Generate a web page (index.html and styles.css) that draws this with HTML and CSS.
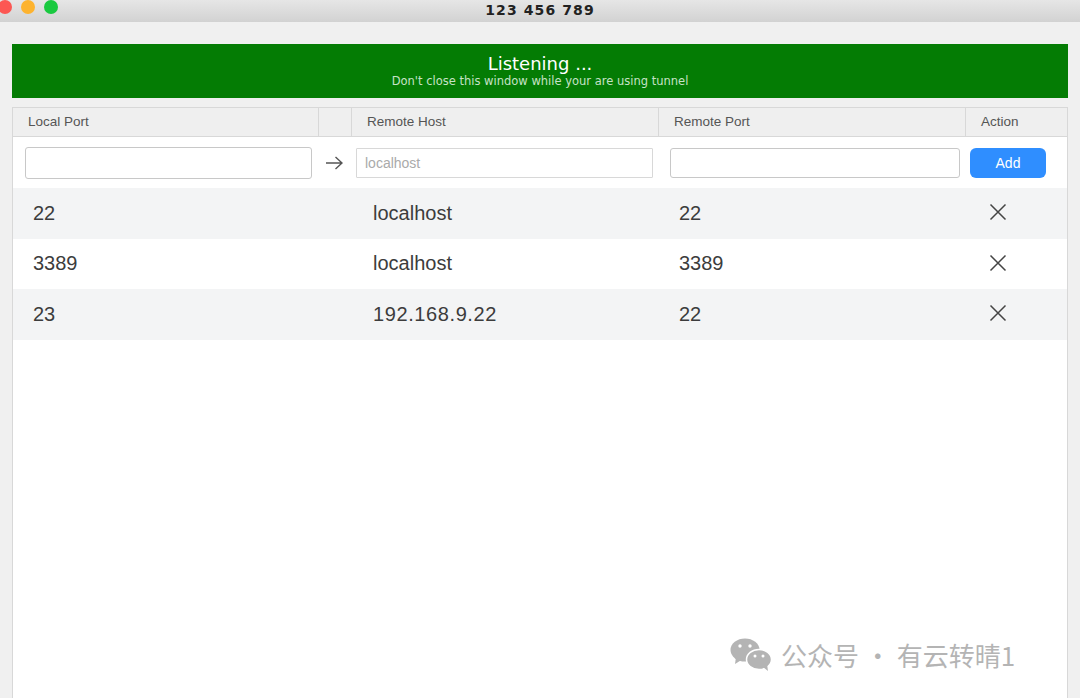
FILE: index.html
```html
<!DOCTYPE html>
<html lang="en">
<head>
<meta charset="utf-8">
<title>123 456 789</title>
<link rel="stylesheet" href="styles.css">
</head>
<body>
<header class="titlebar">
  <div class="lights"><span class="light red"></span><span class="light amber"></span><span class="light green"></span></div>
  <div class="title">123 456 789</div>
</header>
<main class="content">
  <section class="banner">
    <div class="banner-title">Listening ...</div>
    <div class="banner-sub">Don't close this window while your are using tunnel</div>
  </section>
  <section class="table">
    <div class="thead">
      <div class="th">Local Port</div>
      <div class="th"></div>
      <div class="th">Remote Host</div>
      <div class="th">Remote Port</div>
      <div class="th last">Action</div>
    </div>
    <div class="form-row">
      <input class="input local" type="text" aria-label="Local Port">
      <svg class="arrow" width="18" height="14" viewBox="0 0 18 14" fill="none" stroke="#555" stroke-width="1.4"><path d="M1 7H17M10.5 1L17 7L10.5 13"/></svg>
      <input class="input host" type="text" placeholder="localhost" aria-label="Remote Host">
      <input class="input port" type="text" aria-label="Remote Port">
      <button class="add" type="button">Add</button>
    </div>
    <div class="row shaded">
      <div>22</div><div>localhost</div><div>22</div>
      <svg class="x" width="18" height="18" viewBox="0 0 18 18" fill="none" stroke="#444" stroke-width="1.5"><path d="M1.5 1.5L16.5 16.5M16.5 1.5L1.5 16.5"/></svg>
    </div>
    <div class="row">
      <div>3389</div><div>localhost</div><div>3389</div>
      <svg class="x" width="18" height="18" viewBox="0 0 18 18" fill="none" stroke="#444" stroke-width="1.5"><path d="M1.5 1.5L16.5 16.5M16.5 1.5L1.5 16.5"/></svg>
    </div>
    <div class="row shaded">
      <div>23</div><div class="ip">192.168.9.22</div><div>22</div>
      <svg class="x" width="18" height="18" viewBox="0 0 18 18" fill="none" stroke="#444" stroke-width="1.5"><path d="M1.5 1.5L16.5 16.5M16.5 1.5L1.5 16.5"/></svg>
    </div>
  </section>
</main>
<div class="watermark">
  <svg class="wechat" width="42" height="34" viewBox="0 0 42 34" fill="#b4b4b4">
    <ellipse cx="15" cy="12" rx="14.500" ry="11.500"/>
    <path d="M6 19L5 26L13 21Z"/>
    <ellipse cx="29" cy="21.500" rx="12.500" ry="10" stroke="#fff" stroke-width="1.500"/>
    <path d="M33 29L38 33L37 26Z"/>
    <circle cx="10" cy="8" r="1.700" fill="#fff"/><circle cx="20" cy="8" r="1.700" fill="#fff"/>
    <circle cx="25" cy="18" r="1.500" fill="#fff"/><circle cx="33" cy="18" r="1.500" fill="#fff"/>
  </svg>
  <span class="wm-text">公众号 · 有云转晴1</span>
</div>
</body>
</html>
```
FILE: styles.css
```css
* { box-sizing: border-box; }
html, body { height: 100%; }
body {
  margin: 0;
  height: 698px;
  overflow: hidden;
  background: #f0f0f0;
  font-family: "Liberation Sans", Arial, sans-serif;
  color: #444;
  position: relative;
}
.titlebar {
  height: 22px;
  background: linear-gradient(#e6e6e6, #d2d2d2);
  position: relative;
  display: flex;
  justify-content: center;
  align-items: center;
}
.lights {
  position: absolute;
  left: -2px;
  top: 0;
  display: flex;
  gap: 9px;
}
.light { width: 14px; height: 14px; border-radius: 50%; }
.red { background: #fc5753; }
.amber { background: #fdb32f; }
.green { background: #1ac940; }
.title {
  font-family: "DejaVu Sans", sans-serif;
  font-weight: 700;
  font-size: 14px;
  letter-spacing: 1.1px;
  color: #222;
  margin-top: -3px;
}
.content {
  padding: 22px 12px 0;
  height: 676px;
  display: flex;
  flex-direction: column;
  gap: 9px;
}
.banner {
  height: 54px;
  background: #047c04;
  color: #fff;
  text-align: center;
  font-family: "DejaVu Sans", sans-serif;
  padding-top: 9px;
}
.banner-title { font-size: 18px; line-height: 22px; }
.banner-sub { font-size: 11.500px; line-height: 14px; color: #c6e2c6; margin-top: -1px; }
.table {
  flex: 1;
  background: #fff;
  border: 1px solid #d8d8d8;
  border-bottom: 0;
}
.thead {
  display: grid;
  grid-template-columns: 306px 33px 307px 307px 1fr;
  height: 29px;
  background: #efefef;
  border-bottom: 1px solid #d8d8d8;
}
.th {
  font-size: 13.500px;
  line-height: 28px;
  padding-left: 15px;
  color: #555;
  border-right: 1px solid #d8d8d8;
}
.th.last { border-right: 0; }
.form-row {
  display: flex;
  align-items: center;
  height: 51px;
}
.input {
  height: 30px;
  background: #fff;
  border: 1px solid #c8c8c8;
  border-radius: 3px;
  font: 14px "Liberation Sans", Arial, sans-serif;
  padding: 0 8px;
}
.input::placeholder { color: #aaa; }
.local { width: 287px; height: 32px; margin-left: 12px; }
.arrow { margin: 0 13px; flex: none; }
.host { width: 297px; border-radius: 1px; border-color: #d8d8d8; }
.port { width: 290px; margin-left: 17px; }
.add {
  width: 76px;
  height: 30px;
  margin-left: 10px;
  background: #2f8eff;
  color: #fff;
  border: 0;
  border-radius: 6px;
  font: 14px "Liberation Sans", Arial, sans-serif;
}
.row {
  display: grid;
  grid-template-columns: 340px 306px 305px 1fr;
  align-items: center;
  height: 50.500px;
  padding-left: 20px;
  font-size: 20px;
  color: #3c3c3c;
}
.row.shaded { background: #f3f4f5; }
.ip { letter-spacing: 0.6px; }
.x { margin-left: 5px; margin-top: -2px; }
.watermark {
  position: absolute;
  left: 730px;
  top: 638px;
  display: flex;
  align-items: center;
  gap: 9px;
}
.wm-text {
  font-family: "Noto Sans CJK SC", sans-serif;
  font-size: 26px;
  line-height: 34px;
  color: #b4b4b4;
  white-space: nowrap;
}
```
